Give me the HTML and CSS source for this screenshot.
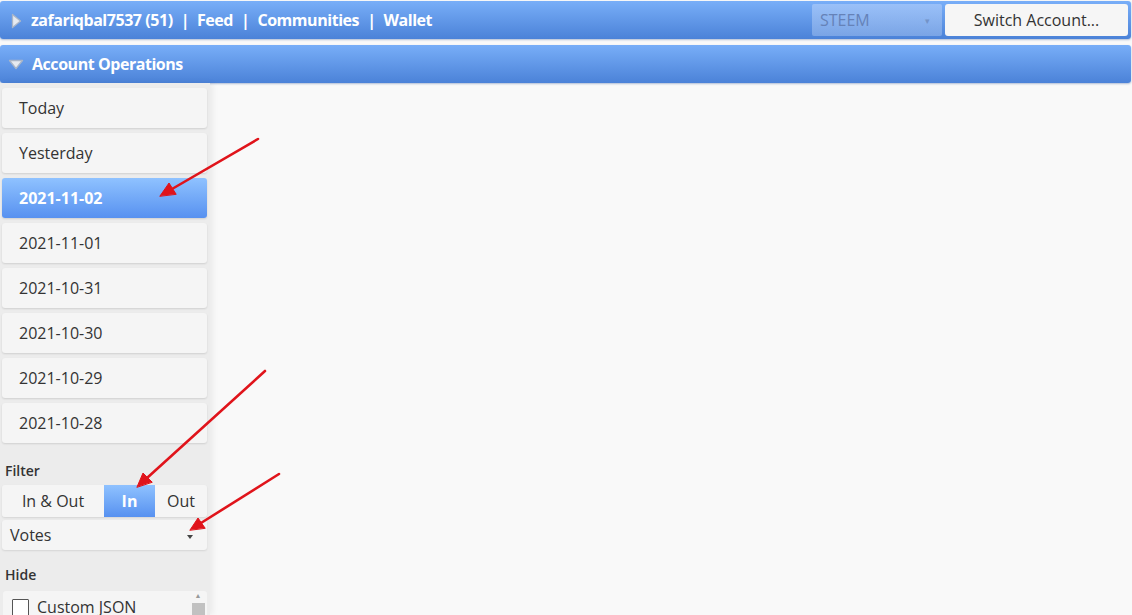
FILE: index.html
```html
<!DOCTYPE html>
<html>
<head>
<meta charset="utf-8">
<link rel="stylesheet" href="styles.css">
</head>
<body>
<div class="page">
  <header class="bar topbar">
    <div class="bar-title">
      <svg class="tri" width="11" height="16" viewBox="0 0 11 16"><path d="M1.5 1.5 L9.5 8 L1.5 14.5 Z" fill="#e6eaf0" stroke="#aab6c8" stroke-width="1.3" stroke-linejoin="round"/></svg>
      <span>zafariqbal7537 (51)</span><span class="sep">|</span><span>Feed</span><span class="sep">|</span><span>Communities</span><span class="sep">|</span><span>Wallet</span>
    </div>
    <div class="bar-right">
      <div class="coin-select"><span>STEEM</span><span class="caret">▾</span></div>
      <button class="switch-btn">Switch Account...</button>
    </div>
  </header>
  <header class="bar opsbar">
    <div class="bar-title">
      <svg class="tri-down" width="16" height="11" viewBox="0 0 16 11"><path d="M1.5 1.5 L14.5 1.5 L8 9.5 Z" fill="#e6eaf0" stroke="#aab6c8" stroke-width="1.3" stroke-linejoin="round"/></svg>
      <span>Account Operations</span>
    </div>
  </header>
  <div class="content">
    <aside class="sidebar">
      <div class="days">
        <div class="day">Today</div>
        <div class="day">Yesterday</div>
        <div class="day active">2021-11-02</div>
        <div class="day">2021-11-01</div>
        <div class="day">2021-10-31</div>
        <div class="day">2021-10-30</div>
        <div class="day">2021-10-29</div>
        <div class="day">2021-10-28</div>
      </div>
      <div class="label filter-label">Filter</div>
      <div class="toggle">
        <div class="seg seg-inout">In &amp; Out</div>
        <div class="seg seg-in active">In</div>
        <div class="seg seg-out">Out</div>
      </div>
      <div class="votes"><span>Votes</span><span class="vcaret"></span></div>
      <div class="label hide-label">Hide</div>
      <div class="listbox">
        <div class="check-row"><span class="box"></span><span>Custom JSON</span></div>
        <div class="scroll"><span class="sarrow">▲</span><span class="thumb"></span></div>
      </div>
    </aside>
    <main class="main"></main>
  </div>
  <svg class="arrows" width="1132" height="615" viewBox="0 0 1132 615">
    <g stroke="#e0141b" stroke-width="2.6" stroke-linecap="round" fill="#e0141b">
      <line x1="258" y1="139" x2="172" y2="189"/>
      <polygon points="160,196 169,183 176,194" stroke-width="1"/>
      <line x1="265" y1="371" x2="147" y2="478"/>
      <polygon points="137,487 143,473 152,482" stroke-width="1"/>
      <line x1="279" y1="474" x2="201" y2="523"/>
      <polygon points="190,530 198,518 205,528" stroke-width="1"/>
    </g>
  </svg>
</div>
</body>
</html>
```
FILE: styles.css
```css
* { box-sizing: border-box; }
html, body { margin: 0; padding: 0; }
body {
  background: #f9f9f9;
  font-family: "Open Sans", "Noto Sans", sans-serif;
  color: #333;
  width: 1132px;
  height: 615px;
  overflow: hidden;
}
.page {
  position: relative;
  width: 1132px;
  height: 615px;
  display: flex;
  flex-direction: column;
}
.bar {
  background: linear-gradient(#78aef8, #4b82d8);
  border-radius: 3px;
  margin: 0 1px 0 0;
  color: #fff;
  display: flex;
  align-items: center;
  justify-content: space-between;
  box-shadow: 0 1px 2px rgba(40,80,150,0.35);
  flex-shrink: 0;
}
.topbar {
  height: 38px;
  margin-top: 1px;
  padding: 0 3px 0 11px;
}
.opsbar {
  height: 38px;
  margin-top: 6px;
  padding: 0 8px;
}
.bar-title {
  display: flex;
  align-items: center;
  font-weight: 700;
  font-size: 16px;
  letter-spacing: -0.45px;
  white-space: pre;
}
.tri { margin-right: 9px; margin-top: 1px; }
.tri-down { margin-right: 8px; margin-top: 1px; }
.sep { margin: 0 8px; }
.bar-right {
  display: flex;
  align-items: center;
  gap: 3px;
}
.coin-select {
  width: 130px;
  height: 32px;
  background: linear-gradient(rgba(185,210,250,0.55), rgba(165,195,240,0.5));
  border-radius: 2px;
  color: #6582b8;
  font-size: 16px;
  display: flex;
  align-items: center;
  justify-content: space-between;
  padding: 0 12px 0 8px;
}
.caret { font-size: 9px; color: #7393c8; }
.switch-btn {
  width: 183px;
  height: 32px;
  border: none;
  border-radius: 3px;
  background: #f6f6f6;
  color: #333;
  font-family: "Open Sans", "Noto Sans", sans-serif;
  font-size: 16px;
  padding: 0;
}
.content {
  flex: 1;
  display: flex;
  min-height: 0;
}
.sidebar {
  width: 210px;
  background: #ececec;
  box-shadow: 3px 0 6px rgba(0,0,0,0.06);
  padding: 5px 3px 0 2px;
  display: flex;
  flex-direction: column;
}
.sidebar > * { flex-shrink: 0; }
.days {
  display: flex;
  flex-direction: column;
  gap: 5px;
}
.day {
  height: 40px;
  background: #f5f5f5;
  border-radius: 3px;
  box-shadow: 0 1px 2px rgba(0,0,0,0.12);
  font-size: 16px;
  display: flex;
  align-items: center;
  padding-left: 17px;
  color: #333;
}
.day.active {
  background: linear-gradient(#8fc2ff, #5791f0);
  color: #fff;
  font-weight: 700;
}
.label {
  font-size: 14px;
  font-weight: 600;
  color: #333;
  padding-left: 3px;
}
.filter-label { margin-top: 18px; height: 24px; }
.toggle {
  display: flex;
  height: 32px;
  border-radius: 3px;
  overflow: hidden;
  box-shadow: 0 1px 2px rgba(0,0,0,0.1);
}
.seg {
  background: #f5f5f5;
  font-size: 16px;
  display: flex;
  align-items: center;
  justify-content: center;
  color: #333;
}
.seg-inout { width: 102px; }
.seg-in { width: 51px; }
.seg-out { flex: 1; }
.seg.active {
  background: linear-gradient(#8fc2ff, #5791f0);
  color: #fff;
  font-weight: 700;
}
.votes {
  margin-top: 3px;
  height: 30px;
  background: #f5f5f5;
  border-radius: 3px;
  box-shadow: 0 1px 2px rgba(0,0,0,0.1);
  display: flex;
  align-items: center;
  justify-content: space-between;
  padding: 0 14px 0 8px;
  font-size: 16px;
  color: #333;
}
.vcaret {
  width: 0; height: 0;
  border-left: 3px solid transparent;
  border-right: 3px solid transparent;
  border-top: 4px solid #444;
  margin-top: 4px;
}
.hide-label { margin-top: 15px; height: 22px; }
.listbox {
  margin: 4px 0 0 1px;
  height: 40px;
  background: #f5f5f5;
  border-radius: 3px;
  display: flex;
  justify-content: space-between;
  padding: 0 2px 0 9px;
}
.check-row {
  display: flex;
  align-items: center;
  gap: 8px;
  font-size: 16px;
  height: 26px;
  margin-top: 3px;
  color: #333;
}
.box {
  width: 17px; height: 17px;
  border: 1.5px solid #555;
  background: #fff;
  border-radius: 1px;
}
.scroll {
  width: 14px;
  display: flex;
  flex-direction: column;
  align-items: center;
  padding-top: 0;
}
.sarrow { font-size: 7px; color: #999; height: 10px; line-height: 10px; }
.thumb { width: 13px; height: 30px; background: #c1c1c1; margin-top: 2px; }
.main { flex: 1; }
.arrows {
  position: absolute;
  left: 0;
  top: 0;
  pointer-events: none;
}
```
